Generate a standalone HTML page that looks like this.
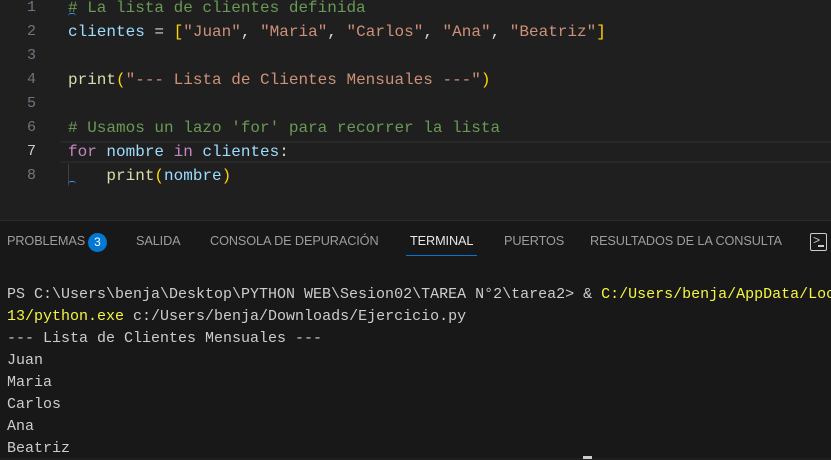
<!DOCTYPE html>
<html><head><meta charset="utf-8"><style>
*{margin:0;padding:0;box-sizing:border-box}
body{width:831px;height:458px;overflow:hidden;background:#1f1f1f;position:relative;font-family:"Liberation Mono",monospace}
.ed{position:absolute;left:0;top:0;width:831px;height:220px;background:#1f1f1f}
.ln{position:absolute;left:0;width:36px;text-align:right;font-size:15px;color:#6e7681;line-height:24px}
.code{position:absolute;left:68px;font-size:16px;line-height:24px;white-space:pre;color:#9cdcfe}
.c{color:#6a9955}.s{color:#ce9178}.y{color:#ffd700}.f{color:#dcdcaa}.k{color:#c586c0}.w{color:#d4d4d4}
.cur{position:absolute;left:60px;top:141px;width:771px;height:22px;border-top:2px solid #282828;border-bottom:2px solid #282828}
.panel{position:absolute;left:0;top:220px;width:831px;height:238px;background:#181818;border-top:1px solid #2b2b2b}
.tab{position:absolute;top:13px;font-family:"Liberation Sans",sans-serif;font-size:12.7px;color:#9d9d9d;letter-spacing:-0.1px}
.term{position:absolute;left:7px;top:63px;font-size:15px;line-height:22px;white-space:pre;color:#cccccc}
.ty{color:#f5f543}
</style></head><body>
<div class="ed">
<div class="cur"></div>
<div class="ln" style="top:-4px">1</div><div class="ln" style="top:20px">2</div><div class="ln" style="top:44px">3</div><div class="ln" style="top:68px">4</div><div class="ln" style="top:92px">5</div><div class="ln" style="top:116px">6</div><div class="ln" style="top:140px;color:#cccccc">7</div><div class="ln" style="top:164px">8</div>
<div class="code" style="top:-4px"><span class="c"># La lista de clientes definida</span></div>
<div class="code" style="top:20px">clientes <span class="w">=</span> <span class="y">[</span><span class="s">"Juan"</span><span class="w">,</span> <span class="s">"Maria"</span><span class="w">,</span> <span class="s">"Carlos"</span><span class="w">,</span> <span class="s">"Ana"</span><span class="w">,</span> <span class="s">"Beatriz"</span><span class="y">]</span></div>
<div class="code" style="top:68px"><span class="f">print</span><span class="y">(</span><span class="s">"--- Lista de Clientes Mensuales ---"</span><span class="y">)</span></div>
<div class="code" style="top:116px"><span class="c"># Usamos un lazo 'for' para recorrer la lista</span></div>
<div class="code" style="top:140px"><span class="k">for</span> nombre <span class="k">in</span> clientes<span class="w">:</span></div>
<div class="code" style="top:164px">    <span class="f">print</span><span class="y">(</span>nombre<span class="y">)</span></div>
<div style="position:absolute;left:68px;top:164px;width:1px;height:22px;background:#404040"></div>
<div style="position:absolute;left:68px;top:13px;width:8px;height:3px;border-top:1.5px solid #3794ff;border-radius:4px 4px 0 0"></div>
<div style="position:absolute;left:68px;top:181px;width:8px;height:3px;border-top:1.5px solid #3794ff;border-radius:4px 4px 0 0"></div>
</div>
<div class="panel">
<div class="tab" style="left:7px">PROBLEMAS</div>
<div style="position:absolute;left:88px;top:12px;width:19px;height:19px;border-radius:50%;background:#0078d4;color:#fff;font-family:'Liberation Sans',sans-serif;font-size:12px;text-align:center;line-height:19px">3</div>
<div class="tab" style="left:136px">SALIDA</div>
<div class="tab" style="left:210px">CONSOLA DE DEPURACIÓN</div>
<div class="tab" style="left:410px;color:#e7e7e7">TERMINAL</div>
<div style="position:absolute;left:406px;top:34px;width:71px;height:1px;background:#0078d4"></div>
<div class="tab" style="left:504px">PUERTOS</div>
<div class="tab" style="left:590px">RESULTADOS DE LA CONSULTA</div>
<div style="position:absolute;left:810px;top:12px;width:17px;height:18px;border:1.5px solid #ccc;border-radius:2px;color:#ccc;font-size:12px;line-height:14px;padding-left:2px">&gt;<span style="position:absolute;left:7px;top:11px;width:6px;height:1.5px;background:#ccc"></span></div>
<div class="term">PS C:\Users\benja\Desktop\PYTHON WEB\Sesion02\TAREA N°2\tarea2&gt; &amp; <span class="ty">C:/Users/benja/AppData/Local</span>
<span class="ty">13/python.exe</span> c:/Users/benja/Downloads/Ejercicio.py
--- Lista de Clientes Mensuales ---
Juan
Maria
Carlos
Ana
Beatriz</div>
<div style="position:absolute;left:583px;top:235px;width:9px;height:3px;background:#ccc"></div>
</div>
</body></html>
